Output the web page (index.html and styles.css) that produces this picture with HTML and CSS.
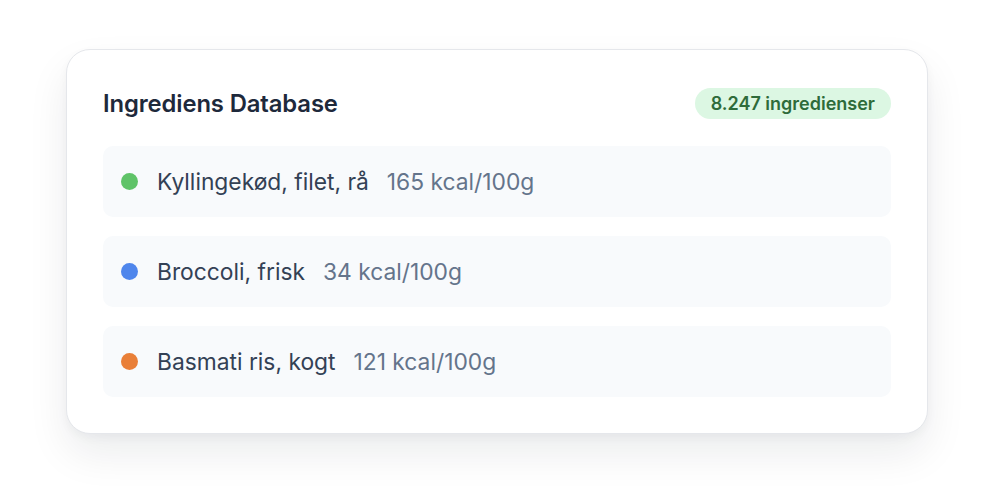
FILE: index.html
```html
<!DOCTYPE html>
<html lang="da">
<head>
<meta charset="utf-8">
<link rel="stylesheet" href="styles.css">
</head>
<body>
<div class="card">
  <div class="header">
    <h2 class="title">Ingrediens Database</h2>
    <span class="badge">8.247 ingredienser</span>
  </div>
  <div class="list">
    <div class="row"><span class="dot green"></span><span class="name">Kyllingekød, filet, rå</span><span class="kcal">165 kcal/100g</span></div>
    <div class="row"><span class="dot blue"></span><span class="name">Broccoli, frisk</span><span class="kcal">34 kcal/100g</span></div>
    <div class="row"><span class="dot orange"></span><span class="name">Basmati ris, kogt</span><span class="kcal">121 kcal/100g</span></div>
  </div>
</div>
</body>
</html>
```
FILE: styles.css
```css
html, body { margin: 0; background: #ffffff; }
body {
  font-family: Inter, "Noto Sans", "Liberation Sans", sans-serif;
  padding: 49px 0 0 66px;
  height: 486px;
  box-sizing: border-box;
}
.card {
  width: 862px;
  box-sizing: border-box;
  background: #fff;
  border: 1px solid #e5e7eb;
  border-radius: 24px;
  padding: 36px 36px 36px 36px;
  box-shadow: 0 20px 40px rgba(15, 23, 42, 0.08), 0 4px 10px rgba(15, 23, 42, 0.04);
}
.header {
  display: flex;
  align-items: center;
  justify-content: space-between;
  height: 35px;
  margin-bottom: 25px;
}
.title {
  margin: 0;
  font-size: 23.8px;
  font-weight: 600;
  color: #1e293b;
  letter-spacing: -0.1px;
}
.badge {
  background: #dcf7e3;
  color: #2e6b3a;
  font-size: 18px;
  font-weight: 600;
  height: 31px;
  line-height: 31px;
  padding: 0 16px;
  border-radius: 999px;
}
.list {
  display: flex;
  flex-direction: column;
  gap: 19px;
}
.row {
  display: flex;
  align-items: center;
  height: 71px;
  box-sizing: border-box;
  padding: 0 18px;
  background: #f8fafc;
  border-radius: 10px;
  font-size: 22.8px;
}
.dot {
  width: 17px;
  height: 17px;
  border-radius: 50%;
  flex: none;
  margin-right: 19px;
}
.green { background: #5fc368; }
.blue { background: #4f86ec; }
.orange { background: #e97f38; }
.name { color: #334155; }
.kcal { color: #64748b; margin-left: 18px; }
```
